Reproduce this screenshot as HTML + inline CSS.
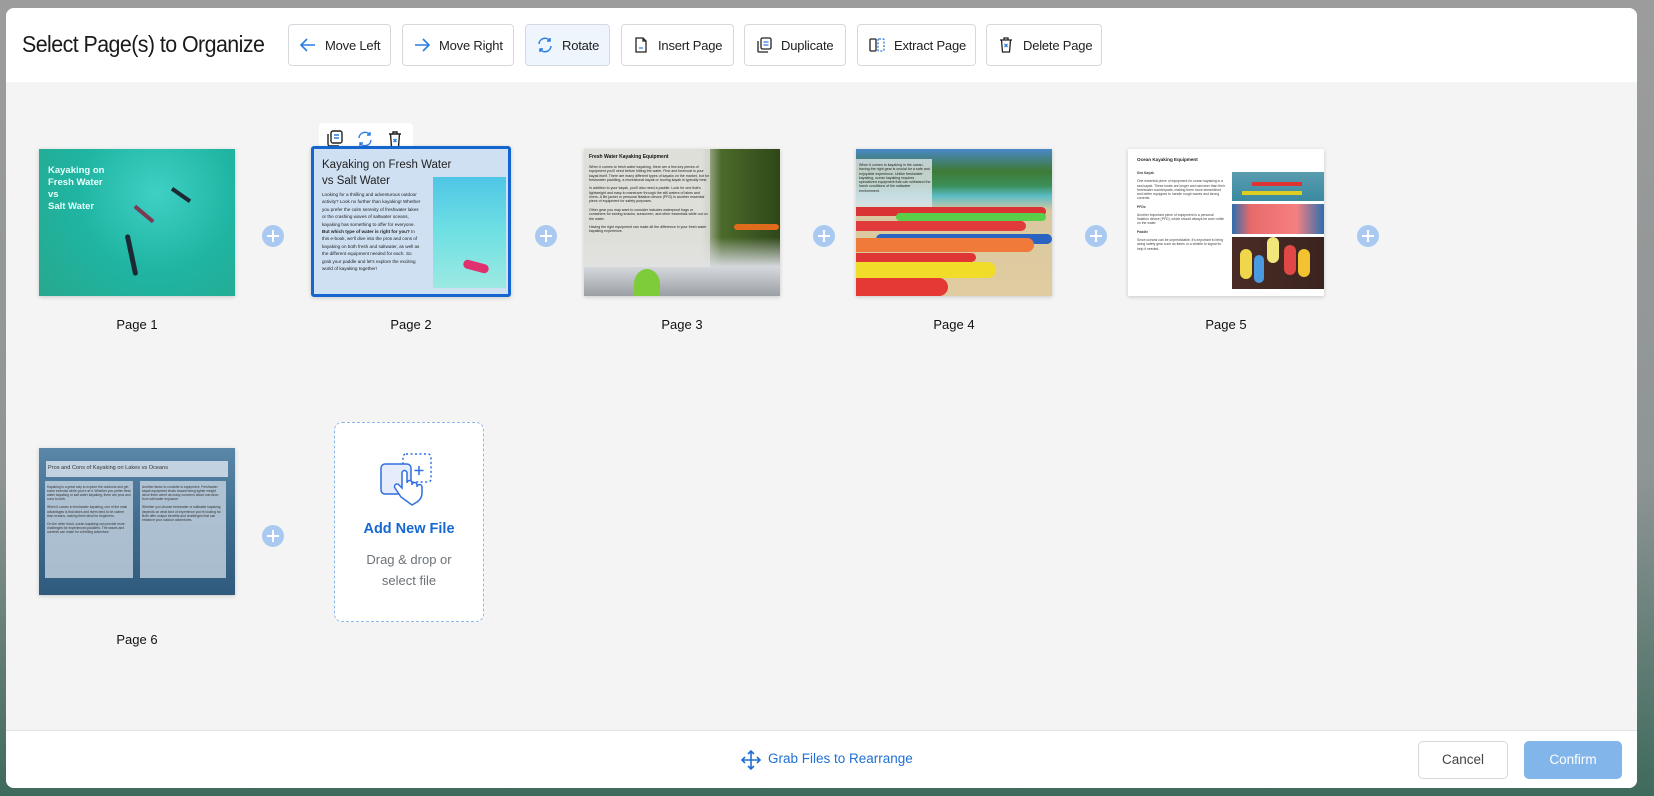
<!DOCTYPE html>
<html><head><meta charset="utf-8"><style>
*{box-sizing:border-box;margin:0;padding:0}
body{width:1654px;height:796px;overflow:hidden;font-family:"Liberation Sans",sans-serif;background:linear-gradient(180deg,#9c9c9c 0%,#8f9595 60%,#3e6a5c 100%);position:relative}
.modal{position:absolute;left:6px;top:8px;width:1631px;height:780px;background:#f4f4f4;border-radius:8px;overflow:hidden}
.hdr{position:absolute;left:0;top:0;width:100%;height:74px;background:#fff}
.title{position:absolute;left:16px;top:23px;font-size:23px;color:#1a1a1a;letter-spacing:-0.6px;transform:scaleX(0.93);transform-origin:left}
.btn{position:absolute;top:16px;height:42px;border:1px solid #d5d9dd;border-radius:4px;background:#fff;font-size:13px;letter-spacing:-0.2px;color:#222;display:flex;align-items:center;padding-left:10px;gap:8px;white-space:nowrap}
.btn svg{width:18px;height:18px;flex:none}
.ftr{position:absolute;left:0;top:722px;width:100%;height:58px;background:#fff;border-top:1px solid #e2e2e2}
.th{position:absolute;width:196px;height:147px;box-shadow:0 1px 4px rgba(0,0,0,.18);overflow:hidden;background:#fff}
.lbl{position:absolute;width:196px;text-align:center;font-size:13px;color:#111}
.plus{position:absolute;width:22px;height:22px;border-radius:50%;background:#a9c9f0}
.plus:before,.plus:after{content:"";position:absolute;background:#fff;left:10px;top:5px;width:2px;height:12px}
.plus:after{left:5px;top:10px;width:12px;height:2px}
.tx{font-size:4px;line-height:5.2px;color:#222}
</style></head><body>
<div class="modal">
 <div class="hdr">
  <div class="title">Select Page(s) to Organize</div>
  <div class="btn" style="left:282px;width:103px"><svg viewBox="0 0 18 18" fill="none" stroke="#2a7de1" stroke-width="1.6"><path d="M16 9H2M8 3L2 9l6 6"/></svg>Move Left</div>
  <div class="btn" style="left:396px;width:112px"><svg viewBox="0 0 18 18" fill="none" stroke="#2a7de1" stroke-width="1.6"><path d="M2 9h14M10 3l6 6-6 6"/></svg>Move Right</div>
  <div class="btn" style="left:519px;width:85px;background:#eef5fd"><svg viewBox="0 0 18 18" fill="none" stroke="#2a7de1" stroke-width="1.5"><path d="M3 8a6 6 0 0 1 11-3M15 10a6 6 0 0 1-11 3M14 2v3h-3M4 16v-3h3"/></svg>Rotate</div>
  <div class="btn" style="left:615px;width:113px"><svg viewBox="0 0 18 18" fill="none" stroke="#222" stroke-width="1.3"><path d="M4 2h7l3 3v11H4zM11 2v3h3"/><path d="M7 12h4" stroke="#2a7de1"/></svg>Insert Page</div>
  <div class="btn" style="left:738px;width:102px"><svg viewBox="0 0 18 18" fill="none" stroke="#222" stroke-width="1.3"><rect x="6" y="2" width="10" height="11" rx="1.5"/><path d="M3 5v10a1 1 0 0 0 1 1h9"/><path d="M8.5 6h5M8.5 9h5" stroke="#2a7de1"/></svg>Duplicate</div>
  <div class="btn" style="left:851px;width:119px"><svg viewBox="0 0 18 18" fill="none" stroke="#222" stroke-width="1.3"><rect x="2" y="3" width="6" height="12" rx="1"/><rect x="10" y="3" width="6" height="12" rx="1" stroke="#2a7de1" stroke-dasharray="2 1.5"/></svg>Extract Page</div>
  <div class="btn" style="left:980px;width:116px"><svg viewBox="0 0 18 18" fill="none" stroke="#222" stroke-width="1.3"><path d="M3 4h12M7 4V2h4v2M4.5 4l1 12h7l1-12"/><path d="M7.5 8l3 3M10.5 8l-3 3" stroke="#2a7de1"/></svg>Delete Page</div>
 </div>

 <div class="th" style="left:33px;top:141px;background:radial-gradient(circle at 60% 30%,#3fd0c4,#1fb5a2 50%,#27a88e 100%)">
  <div style="position:absolute;left:9px;top:16px;color:#e8fffb;font-weight:bold;font-size:9.5px;line-height:12px">Kayaking on<br>Fresh Water<br>vs<br>Salt Water</div>
  <div style="position:absolute;left:90px;top:85px;width:5px;height:42px;background:#1b2a33;transform:rotate(-12deg);border-radius:3px"></div>
  <div style="position:absolute;left:103px;top:53px;width:4px;height:24px;background:#7a3b55;transform:rotate(-50deg)"></div>
  <div style="position:absolute;left:140px;top:35px;width:4px;height:22px;background:#1b2a33;transform:rotate(-55deg)"></div>
 </div>
 <div class="lbl" style="left:33px;top:309px">Page 1</div>
 <div class="plus" style="left:256px;top:217px"></div>

 <div style="position:absolute;left:313px;top:115px;width:94px;height:30px;background:#fff;border-radius:4px"></div>
 <svg style="position:absolute;left:320px;top:122px" width="86" height="18" viewBox="0 0 86 18" fill="none" stroke-width="1.4"><g stroke="#222"><rect x="5" y="1" width="11" height="12" rx="2"/><path d="M2 4v10a2 2 0 0 0 2 2h9"/></g><path d="M8 5h5M8 8h5" stroke="#2a7de1"/><g stroke="#2a7de1"><path d="M33 8a6 6 0 0 1 11-3M45 10a6 6 0 0 1-11 3M44 2v3h-3M34 16v-3h3"/></g><g stroke="#222"><path d="M63 4h12M67 4V2h4v2M64.5 4l1 13h7l1-13"/></g><path d="M67.5 9l3 3M70.5 9l-3 3" stroke="#2a7de1"/></svg>
 <div class="th" style="left:305px;top:138px;width:200px;height:151px;border:3px solid #1565d0;background:#cfe0f2;border-radius:3px">
  <div style="position:absolute;left:8px;top:8px;font-size:11.5px;line-height:16px;color:#222">Kayaking on Fresh Water<br>vs Salt Water</div>
  <div class="tx" style="position:absolute;left:8px;top:42px;width:100px;font-size:4.6px;line-height:7.4px">Looking for a thrilling and adventurous outdoor activity? Look no further than kayaking! Whether you prefer the calm serenity of freshwater lakes or the crashing waves of saltwater oceans, kayaking has something to offer for everyone. <b>But which type of water is right for you?</b> In this e-book, we'll dive into the pros and cons of kayaking on both fresh and saltwater, as well as the different equipment needed for each. So grab your paddle and let's explore the exciting world of kayaking together!</div>
  <div style="position:absolute;left:119px;top:28px;width:73px;height:111px;background:linear-gradient(180deg,#4fc6e6,#6fe0e3 50%,#9ce9e2)"><div style="position:absolute;left:30px;top:85px;width:26px;height:9px;background:#e0306d;border-radius:5px;transform:rotate(15deg)"></div></div>
 </div>
 <div class="lbl" style="left:307px;top:309px">Page 2</div>
 <div class="plus" style="left:529px;top:217px"></div>

 <div class="th" style="left:578px;top:141px;background:linear-gradient(90deg,#c9cabf 0%,#c9cabf 60%,#4b6a2a 70%,#2f4718 100%)">
  <div style="position:absolute;left:0;top:0;width:100%;height:100%;background:linear-gradient(180deg,rgba(255,255,255,0) 60%,#d5d8dc 80%,#9ba0a5 100%)"></div>
  <div style="position:absolute;left:0;top:0;width:126px;height:118px;background:rgba(230,230,225,.75)"></div>
  <div style="position:absolute;left:5px;top:5px;font-size:5px;font-weight:bold;color:#111">Fresh Water Kayaking Equipment</div>
  <div class="tx" style="position:absolute;left:5px;top:16px;width:120px;font-size:3.6px;line-height:4.3px">When it comes to fresh water kayaking, there are a few key pieces of equipment you'll need before hitting the water. First and foremost is your kayak itself. There are many different types of kayaks on the market, but for freshwater paddling, a recreational kayak or touring kayak is typically best.<br><br>In addition to your kayak, you'll also need a paddle. Look for one that's lightweight and easy to maneuver through the still waters of lakes and rivers. A life jacket or personal flotation device (PFD) is another essential piece of equipment for safety purposes.<br><br>Other gear you may want to consider includes waterproof bags or containers for storing snacks, sunscreen, and other essentials while out on the water.<br><br>Having the right equipment can make all the difference in your fresh water kayaking experience.</div>
  <div style="position:absolute;left:50px;top:120px;width:26px;height:30px;background:#7fcc3a;border-radius:50% 50% 0 0"></div>
  <div style="position:absolute;left:150px;top:75px;width:45px;height:6px;background:#e06b1c;border-radius:3px"></div>
 </div>
 <div class="lbl" style="left:578px;top:309px">Page 3</div>
 <div class="plus" style="left:807px;top:217px"></div>

 <div class="th" style="left:850px;top:141px;background:linear-gradient(180deg,#4a88c9 0%,#3e7a36 15%,#3b8f5a 25%,#5bbcc6 32%,#d9c8a0 42%,#e0cca0 100%)">
  <div style="position:absolute;left:0;top:10px;width:76px;height:48px;background:rgba(225,230,235,.8)"></div>
  <div class="tx" style="position:absolute;left:3px;top:14px;width:72px;font-size:3.6px;line-height:4.3px">When it comes to kayaking in the ocean, having the right gear is crucial for a safe and enjoyable experience. Unlike freshwater kayaking, ocean kayaking requires specialized equipment that can withstand the harsh conditions of the saltwater environment.</div>
  <div style="position:absolute;left:0;top:58px;width:190px;height:9px;background:#d93333;border-radius:0 6px 6px 0"></div>
  <div style="position:absolute;left:40px;top:64px;width:150px;height:8px;background:#5ad04a;border-radius:5px"></div>
  <div style="position:absolute;left:0;top:72px;width:170px;height:10px;background:#e03a3a;border-radius:0 6px 6px 0"></div>
  <div style="position:absolute;left:20px;top:85px;width:176px;height:10px;background:#2a63c2;border-radius:6px"></div>
  <div style="position:absolute;left:0;top:89px;width:178px;height:14px;background:#f07a3a;border-radius:0 8px 8px 0"></div>
  <div style="position:absolute;left:0;top:104px;width:120px;height:9px;background:#e03535;border-radius:0 6px 6px 0"></div>
  <div style="position:absolute;left:0;top:113px;width:140px;height:16px;background:#f2dc2a;border-radius:0 9px 9px 0"></div>
  <div style="position:absolute;left:0;top:129px;width:92px;height:18px;background:#e53a34;border-radius:0 10px 10px 0"></div>
 </div>
 <div class="lbl" style="left:850px;top:309px">Page 4</div>
 <div class="plus" style="left:1079px;top:217px"></div>

 <div class="th" style="left:1122px;top:141px">
  <div style="position:absolute;left:9px;top:8px;font-size:4.6px;font-weight:bold;color:#222">Ocean Kayaking Equipment</div>
  <div class="tx" style="position:absolute;left:9px;top:22px;width:88px;font-size:3.4px;line-height:4.2px;color:#444"><b>Sea Kayak</b><br><br>One essential piece of equipment for ocean kayaking is a sea kayak. These boats are longer and narrower than their freshwater counterparts, making them more streamlined and better equipped to handle rough waves and strong currents.<br><br><b>PFDs</b><br><br>Another important piece of equipment is a personal flotation device (PFD), which should always be worn while on the water.<br><br><b>Paddle</b><br><br>Since oceans can be unpredictable, it's important to bring along safety gear such as flares or a whistle to signal for help if needed.</div>
  <div style="position:absolute;left:104px;top:23px;width:92px;height:29px;background:linear-gradient(180deg,#5a9cb0,#3a8aa0)"><div style="position:absolute;left:20px;top:10px;width:50px;height:4px;background:#d33"></div><div style="position:absolute;left:10px;top:19px;width:60px;height:4px;background:#dc2"></div></div>
  <div style="position:absolute;left:104px;top:55px;width:92px;height:30px;background:linear-gradient(90deg,#2d6fb0,#e86a6a 20%,#f58080 70%,#2d6fb0)"></div>
  <div style="position:absolute;left:104px;top:88px;width:92px;height:52px;background:linear-gradient(90deg,#4a2c25,#3a2420)"><div style="position:absolute;left:8px;top:12px;width:12px;height:30px;background:#f0d64a;border-radius:6px"></div><div style="position:absolute;left:35px;top:0;width:12px;height:26px;background:#f0e67a;border-radius:6px"></div><div style="position:absolute;left:52px;top:8px;width:12px;height:30px;background:#e04848;border-radius:6px"></div><div style="position:absolute;left:66px;top:12px;width:12px;height:28px;background:#f2c230;border-radius:6px"></div><div style="position:absolute;left:22px;top:18px;width:10px;height:28px;background:#4a9ae0;border-radius:6px"></div></div>
 </div>
 <div class="lbl" style="left:1122px;top:309px">Page 5</div>
 <div class="plus" style="left:1351px;top:217px"></div>

 <div class="th" style="left:33px;top:440px;background:linear-gradient(180deg,#5a87a8,#3f6d90 50%,#2f5a7e)">
  <div style="position:absolute;left:7px;top:13px;width:182px;height:16px;background:rgba(215,225,235,.85)"></div>
  <div style="position:absolute;left:9px;top:17px;font-size:5.6px;color:#333">Pros and Cons of Kayaking on Lakes vs Oceans</div>
  <div style="position:absolute;left:6px;top:33px;width:88px;height:97px;background:rgba(200,212,225,.8)"></div>
  <div style="position:absolute;left:101px;top:33px;width:86px;height:97px;background:rgba(200,212,225,.8)"></div>
  <div class="tx" style="position:absolute;left:8px;top:37px;width:84px;font-size:3.3px;line-height:4.1px;color:#333">Kayaking is a great way to explore the outdoors and get some exercise while you're at it. Whether you prefer fresh water kayaking or salt water kayaking, there are pros and cons to both.<br><br>When it comes to freshwater kayaking, one of the main advantages is that lakes and rivers tend to be calmer than oceans, making them ideal for beginners.<br><br>On the other hand, ocean kayaking can provide more challenges for experienced paddlers. The waves and currents can make for a thrilling adventure.</div>
  <div class="tx" style="position:absolute;left:103px;top:37px;width:82px;font-size:3.3px;line-height:4.1px;color:#333">Another factor to consider is equipment. Freshwater kayak equipment tends toward being lighter weight since there aren't as many concerns about corrosion from salt water exposure.<br><br>Whether you choose freshwater or saltwater kayaking depends on what kind of experience you're looking for. Both offer unique benefits and challenges that can enhance your outdoor adventures.</div>
 </div>
 <div class="lbl" style="left:33px;top:624px">Page 6</div>
 <div class="plus" style="left:256px;top:517px"></div>

 <div style="position:absolute;left:328px;top:414px;width:150px;height:200px;background:#fff;border:1.3px dashed #8fb8ea;border-radius:8px">
  <svg style="position:absolute;left:44px;top:28px" width="56" height="56" viewBox="0 0 56 56" fill="none" stroke="#2f6fe0" stroke-width="1.5"><rect x="24" y="3" width="28" height="28" rx="3" stroke-dasharray="2 2.5"/><path d="M40 15v9M35.5 19.5h9"/><rect x="2" y="13" width="30" height="30" rx="4" fill="#e6ecfb"/><path d="M22 46l-6-9a2.5 2.5 0 0 1 4-3l3 3V22a2.5 2.5 0 0 1 5 0v10a2.5 2.5 0 0 1 5 0v2a2.5 2.5 0 0 1 5 0v2a2.5 2.5 0 0 1 5 0v6c0 4-2 7-5 9l-5 3z" fill="#fff"/></svg>
  <div style="position:absolute;left:0;top:98px;width:100%;text-align:center;font-size:14.5px;font-weight:bold;color:#1768d2">Add New File</div>
  <div style="position:absolute;left:0;top:126px;width:100%;text-align:center;font-size:13px;line-height:21px;color:#6c7278">Drag &amp; drop or<br>select file</div>
 </div>

 <div class="ftr">
  <svg style="position:absolute;left:735px;top:19px" width="20" height="20" viewBox="0 0 20 20" fill="none" stroke="#1f6fd6" stroke-width="1.6"><path d="M10 1v18M1 10h18M7 4l3-3 3 3M7 16l3 3 3-3M4 7l-3 3 3 3M16 7l3 3-3 3"/></svg>
  <div style="position:absolute;left:762px;top:20px;font-size:13.5px;color:#1f6fd6">Grab Files to Rearrange</div>
  <div style="position:absolute;left:1412px;top:10px;width:90px;height:38px;border:1px solid #d5d9dd;border-radius:5px;text-align:center;line-height:36px;font-size:13.5px;color:#444">Cancel</div>
  <div style="position:absolute;left:1518px;top:10px;width:98px;height:38px;background:#82b5e9;border-radius:5px;text-align:center;line-height:38px;font-size:13.5px;color:#fff">Confirm</div>
 </div>
</div>
</body></html>
